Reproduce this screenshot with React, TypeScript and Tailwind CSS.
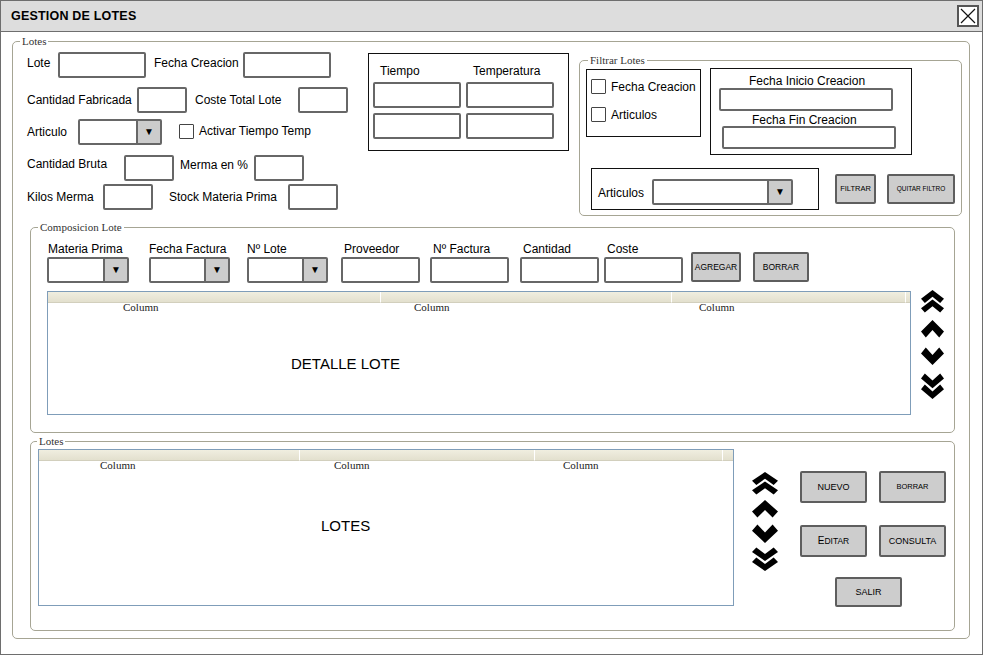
import React from 'react';

// wireframe: gestion de lotes

function Lbl({ className = '', children }: { className?: string; children: React.ReactNode }) {
  return <span className={'whitespace-nowrap leading-[14px] ' + className}>{children}</span>;
}

function Field({ className = '' }: { className?: string }) {
  return <div className={'shrink-0 border-2 border-[#676767] rounded-[2px] bg-white ' + className} />;
}

function Combo({ className = '' }: { className?: string }) {
  return (
    <div className={'shrink-0 h-[26px] flex border-2 border-[#676767] rounded-[2px] bg-white ' + className}>
      <div className="flex-1" />
      <div className="w-[24px] bg-[#cccccc] border-l-2 border-[#676767] flex items-center justify-center text-[10px] leading-none">▼</div>
    </div>
  );
}

function Check({ label }: { label: string }) {
  return (
    <div className="flex items-center gap-[5px]">
      <div className="w-[15px] h-[15px] border-[1.5px] border-[#444] rounded-[1px] bg-white" />
      <Lbl>{label}</Lbl>
    </div>
  );
}

function Btn({ className = '', children }: { className?: string; children: React.ReactNode }) {
  return (
    <div className={'shrink-0 bg-[#cdcdcd] border-2 border-[#5e5e5e] rounded-[2px] flex items-center justify-center leading-none whitespace-nowrap ' + className}>
      {children}
    </div>
  );
}

function Legend({ className = '', children }: { className?: string; children: React.ReactNode }) {
  return (
    <legend className={"px-[2px] font-['Liberation_Serif',serif] font-normal text-[11px] leading-[13px] text-[#333] " + className}>
      {children}
    </legend>
  );
}

type Col = { cls: string; pad?: string; sep: boolean };

function Table({ className = '', cols, title, bodyPad }: { className?: string; cols: Col[]; title: string; bodyPad: string }) {
  return (
    <div className={'shrink-0 border border-[#7f9db9] bg-white overflow-hidden flex flex-col ' + className}>
      <div className="flex">
        {cols.map((c, i) => (
          <div key={i} className={'flex flex-col ' + c.cls}>
            <div
              className={
                'h-[11px] bg-gradient-to-b from-[#f0eee0] to-[#e3e0ce] border-b border-[#d2cfbd] ' +
                (c.sep ? 'border-r border-r-white' : '')
              }
            />
            {c.pad && (
              <div className={"-mt-[2px] leading-[12px] font-['Liberation_Serif',serif] text-[11px] text-[#222] " + c.pad}>
                Column
              </div>
            )}
          </div>
        ))}
      </div>
      <div className={'text-[15px] leading-[18px] ' + bodyPad}>{title}</div>
    </div>
  );
}

function ArrowUp({ className = '' }: { className?: string }) {
  return (
    <svg className={className} viewBox="0 0 24 18" preserveAspectRatio="none">
      <polygon points="12,0 24,11.5 19,17.5 12,10 5,17.5 0,11.5" fill="#000" />
    </svg>
  );
}

function ArrowDown({ className = '' }: { className?: string }) {
  return (
    <svg className={className} viewBox="0 0 24 18" preserveAspectRatio="none">
      <polygon points="12,18 24,6.5 19,0.5 12,8 5,0.5 0,6.5" fill="#000" />
    </svg>
  );
}

function ArrowUp2({ className = '' }: { className?: string }) {
  return (
    <svg className={className} viewBox="0 0 24 24" preserveAspectRatio="none">
      <polygon points="12,0 24,9 20,13.5 12,7 4,13.5 0,9" fill="#000" />
      <polygon points="12,10 24,19 20,23.5 12,17 4,23.5 0,19" fill="#000" />
    </svg>
  );
}

function ArrowDown2({ className = '' }: { className?: string }) {
  return (
    <svg className={className} viewBox="0 0 24 24" preserveAspectRatio="none">
      <polygon points="12,24 24,15 20,10.5 12,17 4,10.5 0,15" fill="#000" />
      <polygon points="12,14 24,5 20,0.5 12,7 4,0.5 0,5" fill="#000" />
    </svg>
  );
}

const compCols: Col[] = [
  { cls: 'w-[333px]', pad: 'pl-[75px]', sep: true },
  { cls: 'w-[291px]', pad: 'pl-[33px]', sep: true },
  { cls: 'w-[234px]', pad: 'pl-[27px]', sep: true },
  { cls: 'flex-1', sep: false },
];

const lotesCols: Col[] = [
  { cls: 'w-[261px]', pad: 'pl-[61px]', sep: true },
  { cls: 'w-[235px]', pad: 'pl-[34px]', sep: true },
  { cls: 'w-[188px]', pad: 'pl-[28px]', sep: true },
  { cls: 'flex-1', sep: false },
];

export default function App() {
  return (
    <div className="w-[983px] h-[655px] bg-white font-['Liberation_Sans',Arial,sans-serif] text-[12px] text-black overflow-hidden">
      <div className="h-[655px] border border-[#6e6e6e] flex flex-col">
        <div className="h-[31px] shrink-0 bg-[#dddddd] border-b border-[#6e6e6e] flex items-center justify-between pl-[10px] pr-[3px]">
          <span className="font-bold text-[12.5px] tracking-[0.2px]">GESTION DE LOTES</span>
          <div className="w-[22px] h-[22px] border-2 border-[#555] bg-white flex items-center justify-center">
            <svg width="16" height="16" viewBox="0 0 16 16">
              <path d="M1 1 L15 15 M15 1 L1 15" stroke="#111" strokeWidth="1.2" />
            </svg>
          </div>
        </div>

        <div className="pl-[11px] pt-[3px]">
          <fieldset className="w-[958px] border border-[#a6a594] rounded-[5px] pb-[7px]">
            <Legend className="ml-[7px]">Lotes</Legend>

            <div className="flex items-start">
              {/* datos del lote */}
              <div className="ml-[14px] mt-[4px] w-[321px] flex flex-col">
                <div className="flex items-center h-[26px]">
                  <Lbl className="w-[31px] -mt-[4px]">Lote</Lbl>
                  <Field className="w-[88px] h-[26px]" />
                  <Lbl className="ml-[8px] w-[89px] -mt-[4px]">Fecha Creacion</Lbl>
                  <Field className="w-[88px] h-[26px]" />
                </div>
                <div className="flex items-center h-[26px] mt-[9px]">
                  <Lbl className="w-[110px]">Cantidad Fabricada</Lbl>
                  <Field className="w-[50px] h-[26px]" />
                  <Lbl className="ml-[8px] w-[103px]">Coste Total Lote</Lbl>
                  <Field className="w-[50px] h-[26px]" />
                </div>
                <div className="flex items-center h-[26px] mt-[6px]">
                  <Lbl className="w-[51px]">Articulo</Lbl>
                  <Combo className="w-[84px]" />
                  <div className="ml-[17px] -mt-[2px] w-[15px] h-[15px] border-[1.5px] border-[#444] rounded-[1px]" />
                  <Lbl className="ml-[5px] -mt-[2px]">Activar Tiempo Temp</Lbl>
                </div>
                <div className="flex items-center h-[26px] mt-[10px]">
                  <Lbl className="w-[97px] -mt-[8px]">Cantidad Bruta</Lbl>
                  <Field className="w-[50px] h-[26px]" />
                  <Lbl className="ml-[6px] w-[74px] -mt-[6px]">Merma en %</Lbl>
                  <Field className="w-[50px] h-[26px]" />
                </div>
                <div className="flex items-center h-[26px] mt-[3px]">
                  <Lbl className="w-[76px]">Kilos Merma</Lbl>
                  <Field className="w-[50px] h-[26px]" />
                  <Lbl className="ml-[16px] w-[119px]">Stock Materia Prima</Lbl>
                  <Field className="w-[50px] h-[26px]" />
                </div>
              </div>

              {/* tiempo / temperatura */}
              <div className="ml-[20px] mt-[5px] w-[201px] h-[98px] border border-[#111] pl-[4px] grid grid-cols-[88px_88px] gap-x-[5px] gap-y-[5px] content-start">
                <div className="h-[23px] pl-[7px] pt-[8px]"><Lbl>Tiempo</Lbl></div>
                <div className="h-[23px] pl-[7px] pt-[8px]"><Lbl>Temperatura</Lbl></div>
                <Field className="w-[88px] h-[26px]" />
                <Field className="w-[88px] h-[26px]" />
                <Field className="w-[88px] h-[26px]" />
                <Field className="w-[88px] h-[26px]" />
              </div>

              {/* filtros */}
              <fieldset className="ml-[10px] mt-[6px] w-[383px] border border-[#a6a594] rounded-[5px] pb-[5px]">
                <Legend className="ml-[8px]">Filtrar Lotes</Legend>
                <div className="flex items-start">
                  <div className="ml-[6px] mt-[2px] w-[115px] h-[68px] border border-[#111] pl-[4px] pt-[9px] flex flex-col gap-[13px]">
                    <Check label="Fecha Creacion" />
                    <Check label="Articulos" />
                  </div>
                  <div className="ml-[9px] mt-[1px] w-[202px] h-[87px] border border-[#111] flex flex-col items-start">
                    <Lbl className="mt-[5px] ml-[38px]">Fecha Inicio Creacion</Lbl>
                    <Field className="ml-[8px] w-[174px] h-[23px]" />
                    <Lbl className="ml-[41px] h-[14px] mt-[2px]">Fecha Fin Creacion</Lbl>
                    <Field className="ml-[11px] -mt-[1px] w-[174px] h-[23px]" />
                  </div>
                </div>
                <div className="flex items-center mt-[13px]">
                  <div className="ml-[11px] w-[228px] h-[42px] border border-[#111] flex items-center pt-[6px] pl-[6px]">
                    <Lbl className="w-[54px] mt-[2px]">Articulos</Lbl>
                    <Combo className="w-[141px]" />
                  </div>
                  <Btn className="ml-[16px] w-[41px] h-[30px] text-[7.5px]">FILTRAR</Btn>
                  <Btn className="ml-[11px] w-[68px] h-[30px] text-[6.5px]">QUITAR FILTRO</Btn>
                </div>
              </fieldset>
            </div>

            {/* composicion */}
            <fieldset className="ml-[17px] mt-[5px] w-[925px] border border-[#a6a594] rounded-[5px] pb-[17px]">
              <Legend className="ml-[7px]">Composicion Lote</Legend>
              <div className="flex items-end ml-[16px]">
                <div className="flex flex-col">
                  <Lbl className="mt-[8px] h-[15px] pl-[1px]">Materia Prima</Lbl>
                  <Combo className="w-[82px]" />
                </div>
                <div className="flex flex-col ml-[20px]">
                  <Lbl className="mt-[8px] h-[15px]">Fecha Factura</Lbl>
                  <Combo className="w-[81px]" />
                </div>
                <div className="flex flex-col ml-[17px]">
                  <Lbl className="mt-[8px] h-[15px]">Nº Lote</Lbl>
                  <Combo className="w-[81px]" />
                </div>
                <div className="flex flex-col ml-[13px]">
                  <Lbl className="mt-[8px] h-[15px] pl-[3px]">Proveedor</Lbl>
                  <Field className="w-[79px] h-[26px]" />
                </div>
                <div className="flex flex-col ml-[10px]">
                  <Lbl className="mt-[8px] h-[15px] pl-[3px]">Nº Factura</Lbl>
                  <Field className="w-[79px] h-[26px]" />
                </div>
                <div className="flex flex-col ml-[11px]">
                  <Lbl className="mt-[8px] h-[15px] pl-[3px]">Cantidad</Lbl>
                  <Field className="w-[79px] h-[26px]" />
                </div>
                <div className="flex flex-col ml-[5px]">
                  <Lbl className="mt-[8px] h-[15px] pl-[3px]">Coste</Lbl>
                  <Field className="w-[79px] h-[26px]" />
                </div>
                <Btn className="ml-[8px] mb-[1px] w-[50px] h-[30px] text-[8.5px]">AGREGAR</Btn>
                <Btn className="ml-[12px] mb-[1px] w-[56px] h-[30px] text-[8.5px]">BORRAR</Btn>
              </div>
              <div className="flex items-start mt-[8px] ml-[16px]">
                <Table className="w-[864px] h-[124px]" cols={compCols} title="DETALLE LOTE" bodyPad="pt-[42px] pl-[243px]" />
                <div className="ml-[10px] -mt-[1px] flex flex-col">
                  <ArrowUp2 className="w-[23px] h-[23px]" />
                  <ArrowUp className="w-[23px] h-[18px] mt-[7px]" />
                  <ArrowDown className="w-[23px] h-[18px] mt-[9px]" />
                  <ArrowDown2 className="w-[23px] h-[26px] mt-[8px]" />
                </div>
              </div>
            </fieldset>

            {/* listado de lotes */}
            <fieldset className="ml-[17px] mt-[2px] w-[925px] border border-[#a6a594] rounded-[5px] pb-[23px]">
              <Legend className="ml-[6px]">Lotes</Legend>
              <div className="flex items-start">
                <Table className="ml-[7px] mt-[1px] w-[696px] h-[157px]" cols={lotesCols} title="LOTES" bodyPad="pt-[46px] pl-[282px]" />
                <div className="ml-[18px] mt-[24px] flex flex-col">
                  <ArrowUp2 className="w-[26px] h-[23px]" />
                  <ArrowUp className="w-[26px] h-[18px] mt-[5px]" />
                  <ArrowDown className="w-[26px] h-[19px] mt-[6px]" />
                  <ArrowDown2 className="w-[26px] h-[24px] mt-[4px]" />
                </div>
                <div className="ml-[22px] mt-[23px] flex flex-col">
                  <div className="grid grid-cols-[67px_67px] gap-x-[12px] gap-y-[22px]">
                    <Btn className="h-[32px] text-[9px]">NUEVO</Btn>
                    <Btn className="h-[32px] text-[7.5px]">BORRAR</Btn>
                    <Btn className="h-[32px] text-[8.5px]">
                      <span className="text-[10px]">E</span>DITAR
                    </Btn>
                    <Btn className="h-[32px] text-[9px]">CONSULTA</Btn>
                  </div>
                  <Btn className="ml-[35px] mt-[20px] w-[67px] h-[30px] text-[9px]">SALIR</Btn>
                </div>
              </div>
            </fieldset>
          </fieldset>
        </div>
      </div>
    </div>
  );
}
